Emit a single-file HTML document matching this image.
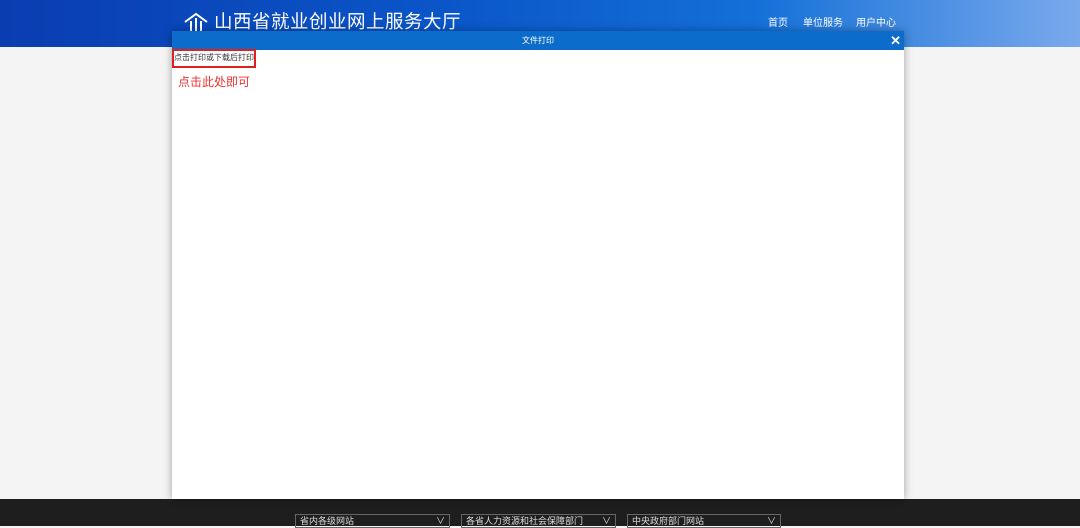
<!DOCTYPE html>
<html><head><meta charset="utf-8"><style>
*{margin:0;padding:0;box-sizing:border-box}
body{width:1080px;height:526px;overflow:hidden;background:#f4f4f4;font-family:"Liberation Sans","Noto Sans CJK SC",sans-serif;position:relative}
.hdr{position:absolute;left:0;top:0;width:1080px;height:47px;background:linear-gradient(90deg,#0a3db0 0%,#0a55c8 40%,#1470d8 70%,#79a9ec 100%)}
.title{position:absolute;left:214px;top:12px;color:#fff;font-size:18.5px;line-height:20px;letter-spacing:0.5px}
.nav{position:absolute;top:18px;color:#fff;font-size:10px;line-height:12px}
.foot{position:absolute;left:0;top:499px;width:1080px;height:27px;background:#1e1e1f}
.sel{position:absolute;top:514px;height:14px;border:1px solid #666;color:#ddd;font-size:9px;padding-left:4px;line-height:13px}
.dlg{position:absolute;left:172px;top:31px;width:732px;height:468px;background:#fff;box-shadow:0 0 8px rgba(0,0,0,.35)}
.dh{height:19px;background:#0b6ccb;color:#fff;font-size:8px;text-align:center;line-height:19px;position:relative}
.x{position:absolute;right:3px;top:0;font-size:13px;font-weight:bold}
.btn{position:absolute;left:0;top:18px;width:84px;height:19px;border:2px solid #e02020;font-size:8px;color:#333;line-height:14px;white-space:nowrap;overflow:hidden}
.hint{position:absolute;left:6px;top:42px;color:#f03030;font-size:12px}
</style></head><body>
<div class="hdr"></div>
<svg style="position:absolute;left:183px;top:12px" width="26" height="20" viewBox="0 0 26 20" fill="none" stroke="#fff" stroke-width="2"><path d="M2 10 L13 2 L24 10"/><path d="M8 19 V9 M13 19 V6 M18 19 V9"/></svg>
<div class="title">山西省就业创业网上服务大厅</div>
<div class="nav" style="left:768px">首页</div>
<div class="nav" style="left:803px">单位服务</div>
<div class="nav" style="left:856px">用户中心</div>
<div class="foot"></div>
<div class="sel" style="left:295px;width:155px">省内各级网站<span style="float:right;padding-right:4px">∨</span></div>
<div class="sel" style="left:461px;width:155px">各省人力资源和社会保障部门<span style="float:right;padding-right:4px">∨</span></div>
<div class="sel" style="left:627px;width:154px">中央政府部门网站<span style="float:right;padding-right:4px">∨</span></div>
<div class="dlg">
<div class="dh">文件打印<span class="x">✕</span></div>
<div class="btn">点击打印或下载后打印</div>
<div class="hint">点击此处即可</div>
</div>
</body></html>
